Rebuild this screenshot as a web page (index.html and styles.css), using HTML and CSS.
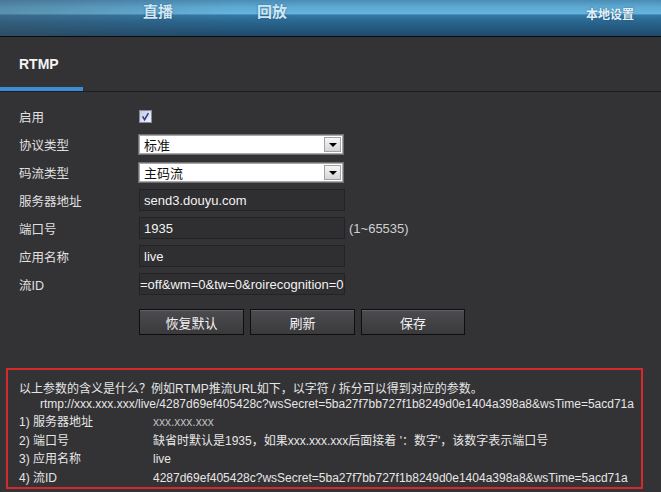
FILE: index.html
```html
<!DOCTYPE html>
<html lang="zh-CN">
<head>
    <meta charset="UTF-8">
    <meta name="viewport" content="width=device-width, initial-scale=1.0">
    <title>RTMP 设置</title>
    <link rel="stylesheet" href="styles.css">
</head>
<body>
    <div class="top-bar">
        <a class="nav-item">直播</a>
        <a class="nav-item">回放</a>
        <a class="nav-item nav-setting">本地设置</a>
    </div>
    <div class="tab-bar">
        <div class="tab active">RTMP</div>
    </div>

    <div class="form">
        <div class="row">
            <label>启用</label>
            <span class="checkbox">
                <svg width="13" height="13" viewBox="0 0 13 13">
                    <defs>
                        <linearGradient id="cbFill" x1="0" y1="0" x2="1" y2="1">
                            <stop offset="0" stop-color="#c3c8dc"/>
                            <stop offset="1" stop-color="#f3f4fa"/>
                        </linearGradient>
                    </defs>
                    <rect x="0.5" y="0.5" width="12" height="12" fill="url(#cbFill)" stroke="#878ba0"/>
                    <path d="M3.6 6.4 L5.6 9.6 L9.4 3.2" fill="none" stroke="#2c3f9c" stroke-width="1.6"/>
                </svg>
            </span>
        </div>
        <div class="row">
            <label>协议类型</label>
            <div class="select"><span>标准</span><i class="arrow"></i></div>
        </div>
        <div class="row">
            <label>码流类型</label>
            <div class="select"><span>主码流</span><i class="arrow"></i></div>
        </div>
        <div class="row">
            <label>服务器地址</label>
            <input class="text-input" type="text" value="send3.douyu.com" readonly>
        </div>
        <div class="row">
            <label>端口号</label>
            <input class="text-input" type="text" value="1935" readonly>
            <span class="hint">(1~65535)</span>
        </div>
        <div class="row">
            <label>应用名称</label>
            <input class="text-input" type="text" value="live" readonly>
        </div>
        <div class="row">
            <label>流ID</label>
            <input class="text-input scrolled" type="text" value="=off&amp;wm=0&amp;tw=0&amp;roirecognition=0" readonly>
        </div>
        <div class="buttons">
            <button>恢复默认</button>
            <button>刷新</button>
            <button class="narrow">保存</button>
        </div>
    </div>

    <div class="note">
        <p class="intro">以上参数的含义是什么？例如RTMP推流URL如下，以字符 / 拆分可以得到对应的参数。</p>
        <p class="intro url">rtmp://xxx.xxx.xxx/live/4287d69ef405428c?wsSecret=5ba27f7bb727f1b8249d0e1404a398a8&amp;wsTime=5acd71a</p>
        <div class="params">
            <div class="param"><span class="key">1) 服务器地址</span><span class="val dim">xxx.xxx.xxx</span></div>
            <div class="param"><span class="key">2) 端口号</span><span class="val">缺省时默认是1935，如果xxx.xxx.xxx后面接着 '：数字'，该数字表示端口号</span></div>
            <div class="param"><span class="key">3) 应用名称</span><span class="val">live</span></div>
            <div class="param"><span class="key">4) 流ID</span><span class="val">4287d69ef405428c?wsSecret=5ba27f7bb727f1b8249d0e1404a398a8&amp;wsTime=5acd71a</span></div>
        </div>
    </div>
</body>
</html>
```

FILE: styles.css
```css
body {
    margin: 0;
    background: #333235;
    color: #e2e2e2;
    font-family: "Liberation Sans", "Noto Sans CJK SC", sans-serif;
    overflow: hidden;
}
.top-bar {
    height: 36px;
    display: flex;
    align-items: flex-start;
    padding: 0 27px 0 143px;
    border-bottom: 1px solid #0c0c0d;
    background:
        linear-gradient(to right, rgba(70, 80, 90, 0.35), rgba(70, 80, 90, 0) 35%),
        linear-gradient(to bottom, #4a8cb5 0%, #5eaad4 20%, #66b3dc 38%, #3479a6 42%, #2a6690 60%, #1e4a6a 100%);
}
.nav-item {
    color: #cfe7f5;
    font-size: 15px;
    font-weight: bold;
    line-height: 16px;
    padding-top: 4px;
    margin-right: 84px;
    text-shadow: 0 0 2px rgba(20, 60, 90, 0.6);
    cursor: pointer;
}
.nav-setting {
    margin: 0 0 0 auto;
    font-size: 12px;
    padding-top: 7px;
    color: #e4f1f9;
}
.tab-bar {
    height: 54px;
    border-bottom: 1px solid #1d1c1f;
}
.tab {
    box-sizing: border-box;
    width: 83px;
    height: 54px;
    padding: 19px 0 0 19px;
    font-size: 14px;
    font-weight: bold;
    line-height: 16px;
    color: #f4f4f4;
}
.tab.active {
    border-bottom: 4px solid #3a8dd6;
}
.form {
    margin-top: 10px;
    padding-left: 19px;
}
.row {
    height: 28px;
    display: flex;
    align-items: center;
}
.row label {
    width: 120px;
    font-size: 12.5px;
    color: #e0e0e0;
}
.checkbox {
    display: flex;
    width: 13px;
    height: 13px;
}
.select {
    box-sizing: border-box;
    width: 204px;
    height: 19px;
    display: flex;
    align-items: center;
    justify-content: space-between;
    background: #fff;
    border: 1px solid #a9a9a9;
    box-shadow: 0 0 0 1px #6f6e72;
    color: #111;
    font-size: 13px;
    padding-left: 4px;
}
.arrow {
    box-sizing: border-box;
    width: 17px;
    height: 15px;
    margin-right: 1px;
    border: 1px solid #a2a2a2;
    background: linear-gradient(#f6f6f6, #d5d5d5);
    position: relative;
}
.arrow::after {
    content: "";
    position: absolute;
    left: 4px;
    top: 5px;
    border-left: 4px solid transparent;
    border-right: 4px solid transparent;
    border-top: 4px solid #000;
}
.text-input {
    box-sizing: border-box;
    width: 206px;
    height: 22px;
    margin: 0;
    padding: 0 0 0 4px;
    background: #2f2e31;
    border: 1px solid #232225;
    color: #f2f2f2;
    font-family: "Liberation Sans", sans-serif;
    font-size: 13px;
    outline: none;
}
.text-input.scrolled {
    padding-left: 0;
}
.hint {
    margin-left: 4px;
    font-size: 13px;
    color: #d0d0d0;
}
.buttons {
    display: flex;
    gap: 6px;
    margin: 11px 0 0 120px;
}
button {
    width: 105px;
    height: 26px;
    background: linear-gradient(#4c4b4f, #3a393c);
    border: 1px solid #0e0e0f;
    box-shadow: inset 0 1px 0 rgba(255, 255, 255, 0.12);
    color: #f2f2f2;
    font-family: "Liberation Sans", "Noto Sans CJK SC", sans-serif;
    font-size: 13px;
    padding: 0;
    cursor: pointer;
}
button.narrow {
    width: 104px;
}
.note {
    box-sizing: border-box;
    width: 637px;
    margin: 33px 0 0 6px;
    padding: 12px 0 0 11px;
    border: 2px solid #d5292b;
    font-size: 12px;
    color: #e6e6e6;
}
.intro {
    margin: 0;
    line-height: 15px;
}
.url {
    padding-left: 21px;
}
.params {
    margin-top: 1px;
}
.param {
    display: flex;
    line-height: 18.5px;
}
.key {
    width: 134px;
}
.dim {
    color: #bdbdbd;
}
```
